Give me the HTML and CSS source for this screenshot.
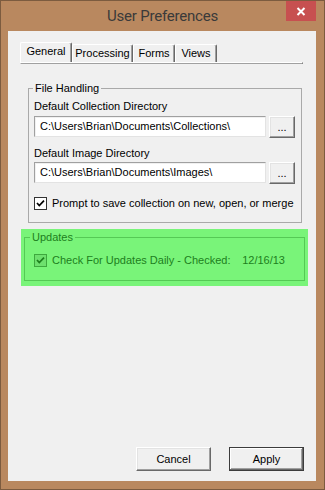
FILE: index.html
```html
<!DOCTYPE html>
<html>
<head>
<meta charset="utf-8">
<link rel="stylesheet" href="styles.css">
</head>
<body>
<div class="window">
  <div class="titlebar">
    <span></span>
    <span class="title">User Preferences</span>
    <span class="close"><svg width="10" height="9" viewBox="0 0 10 9"><path d="M1.5 1L8.5 8M8.5 1L1.5 8" stroke="#fff" stroke-width="2"/></svg></span>
  </div>
  <div class="client">
    <div class="tabctl">
      <div class="tabs">
        <div class="tab active">General</div>
        <div class="tab">Processing</div>
        <div class="tab">Forms</div>
        <div class="tab">Views</div>
      </div>
      <div class="tabpanel"></div>
    </div>

    <fieldset class="group files">
      <legend>File Handling</legend>
      <div class="label first">Default Collection Directory</div>
      <div class="pathrow">
        <div class="textbox">C:\Users\Brian\Documents\Collections\</div>
        <div class="btn browse">...</div>
      </div>
      <div class="label second">Default Image Directory</div>
      <div class="pathrow">
        <div class="textbox">C:\Users\Brian\Documents\Images\</div>
        <div class="btn browse">...</div>
      </div>
      <div class="check prompt">
        <span class="box"><svg width="11" height="11" viewBox="0 0 11 11"><path d="M2 5l2.3 2.6L9 2.6" fill="none" stroke="#000" stroke-width="1.7"/></svg></span>
        <span>Prompt to save collection on new, open, or merge</span>
      </div>
    </fieldset>

    <div class="highlight">
      <fieldset class="group updates">
        <legend>Updates</legend>
        <div class="check daily">
          <span class="box"><svg width="11" height="11" viewBox="0 0 11 11"><path d="M2 5l2.3 2.6L9 2.6" fill="none" stroke="#1d7f1d" stroke-width="1.7"/></svg></span>
          <span>Check For Updates Daily - Checked:</span>
          <span class="date">12/16/13</span>
        </div>
      </fieldset>
    </div>

    <div class="buttons">
      <div class="btn cmd">Cancel</div>
      <div class="btn cmd default">Apply</div>
    </div>
  </div>
</div>
</body>
</html>
```

FILE: styles.css
```css
* { box-sizing: border-box; margin: 0; padding: 0; }
html, body { margin: 0; background: #fff; }
body {
  font-family: "Liberation Sans", Arial, sans-serif;
  font-size: 11px;
  color: #000;
}
.window {
  width: 325px;
  height: 490px;
  border: 1px solid #7c5b3f;
  background: #b9885f;
  display: flex;
  flex-direction: column;
}
.titlebar {
  height: 30px;
  display: grid;
  grid-template-columns: 1fr auto 1fr;
  align-items: start;
}
.title {
  font-family: Roboto, "Noto Sans", sans-serif;
  font-size: 15px;
  color: #3a3a3a;
  line-height: 30px;
  letter-spacing: -0.2px;
}
.close {
  justify-self: end;
  margin-right: 8px;
  width: 30px;
  height: 20px;
  background: #c75050;
  display: flex;
  align-items: center;
  justify-content: center;
}
.client {
  margin: 0 8px 0 7px;
  height: 450px;
  background: #f0f0f0;
  display: flex;
  flex-direction: column;
}

/* tabs */
.tabctl {
  margin: 11px 0 0 12px;
  width: 283px;
}
.tabs {
  display: flex;
  align-items: flex-end;
  height: 20px;
}
.tab {
  height: 18px;
  line-height: 16px;
  text-align: center;
  background: #f0f0f0;
  border-top: 1px solid #fff;
  border-left: 1px solid #fff;
  border-right: 1px solid #696969;
  box-shadow: inset -1px 0 #a0a0a0;
  border-radius: 2px 2px 0 0;
}
.tab.active {
  height: 20px;
  width: 52px;
  line-height: 17px;
}
.tab:nth-child(2) { width: 61px; }
.tab:nth-child(3) { width: 42px; }
.tab:nth-child(4) { width: 42px; }
.tabpanel {
  height: 2px;
  border-top: 1px solid #fff;
  border-bottom: 1px solid #a0a0a0;
  border-right: 1px solid #696969;
  border-left: 1px solid #fff;
}

/* group boxes */
.group {
  border: 1px solid #a9a9a9;
}
.group legend {
  line-height: 13px;
  padding: 0 2px;
}
.files {
  margin: 18px 0 0 20px;
  width: 274px;
  padding: 0 6px 12px 5px;
}
.files legend { margin-left: -1px; }
.label { line-height: 14px; }
.label.first { margin-top: 4px; }
.label.second { margin-top: 8px; }
.pathrow {
  display: flex;
  gap: 3px;
  height: 22px;
  margin-top: 3px;
}
.label.second + .pathrow { margin-top: 2px; }
.textbox {
  width: 232px;
  height: 21px;
  background: #fff;
  border-top: 1px solid #a0a0a0;
  border-left: 1px solid #a0a0a0;
  border-right: 1px solid #e3e3e3;
  border-bottom: 1px solid #e3e3e3;
  box-shadow: inset 1px 1px #f0f0f0;
  padding-left: 5px;
  line-height: 19px;
  white-space: nowrap;
  overflow: hidden;
}
.btn {
  background: #f0f0f0;
  border-top: 1px solid #fff;
  border-left: 1px solid #fff;
  border-right: 1px solid #696969;
  border-bottom: 1px solid #696969;
  box-shadow: inset -1px -1px #a0a0a0, inset 1px 1px #e3e3e3;
  text-align: center;
}
.browse {
  width: 26px;
  height: 22px;
  line-height: 20px;
}
.check {
  display: flex;
  align-items: center;
  height: 13px;
  line-height: 13px;
}
.box {
  width: 13px;
  height: 13px;
  border: 1px solid #333;
  background: #fff;
  margin-right: 5px;
  display: flex;
}
.prompt { margin-top: 13px; }

/* updates highlight */
.highlight {
  margin: 6px 0 0 13px;
  width: 287px;
  height: 57px;
  padding: 2px 3px 5px 3px;
  background: #79f479;
}
.updates {
  height: 50px;
  border-color: #55c955;
  padding: 0 19px 0 9px;
  color: #1d7f1d;
}
.updates legend { margin-left: -4px; }
.daily { margin-top: 10px; }
.daily .box {
  border-color: #3ea83e;
  background: #6ee06e;
}
.date { margin-left: auto; }

/* command buttons */
.buttons {
  margin-top: auto;
  margin-bottom: 10px;
  display: flex;
  justify-content: flex-end;
  gap: 18px;
  padding-right: 12px;
}
.cmd {
  width: 75px;
  height: 24px;
  line-height: 22px;
}
.cmd.default {
  border: 1px solid #3c3c3c;
  box-shadow: inset -1px -1px #696969, inset 1px 1px #fff, inset -2px -2px #a0a0a0;
}
```
